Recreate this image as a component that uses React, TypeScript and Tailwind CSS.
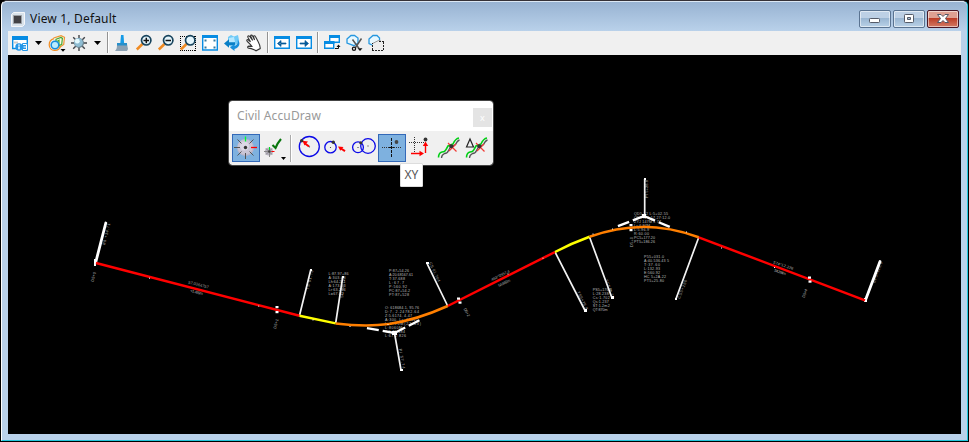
import React from "react";

const FONT = "font-['Noto_Sans',sans-serif]";

function Tool({ children }: { children: React.ReactNode }) {
  return (
    <span className="flex h-6 w-[22px] shrink-0 items-center justify-center">
      <svg width="18" height="18" viewBox="-1 -1 18 18" fill="none">{children}</svg>
    </span>
  );
}

function Caret() {
  return (
    <span className="flex h-6 w-[15px] shrink-0 items-center justify-center">
      <svg width="7" height="4" viewBox="0 0 7 4"><path d="M0 0h7L3.5 4z" fill="#000" /></svg>
    </span>
  );
}

function Separator() {
  return <span className="mx-[2px] my-[1px] block h-[21px] w-[2px] shrink-0 border-l border-[#939393] bg-white" />;
}

function Lens({ mode }: { mode: "plus" | "minus" | "box" }) {
  return (
    <>
      {mode === "box" && <path d="M0 1.5h16M0 15.5h16M.5 1v15M15.5 1v15" stroke="#000" strokeDasharray="1 1" shapeRendering="crispEdges" />}
      <path d="M.8 14.5L6.5 9" stroke="#f08b22" strokeWidth="2.5" />
      <circle cx="10.2" cy="5.3" r="4.7" fill="#e4f5fc" stroke="#17435c" strokeWidth="1.7" />
      {mode !== "box" && <path d="M7.5 5.5h5.5" stroke="#111" strokeWidth="1.5" />}
      {mode === "plus" && <path d="M10.3 2.7v5.5" stroke="#111" strokeWidth="1.5" />}
    </>
  );
}

function PaneArrow({ next = false }: { next?: boolean }) {
  return (
    <>
      <path d="M.7 2h14.6v11.3H.7z" fill="#fff" stroke="#078ce3" strokeWidth="1.4" />
      <path d="M0 1h16v3H0z" fill="#078ce3" />
      <path d={next ? "M4 8h7v1H4zM9 5.5l3.5 3-3.5 3z" : "M5 8h7v1H5zM7 5.5l-3.5 3 3.5 3z"} fill="#075a99" stroke="#075a99" strokeWidth=".7" />
    </>
  );
}

function Toolbar() {
  return (
    <div className="flex h-6 items-start bg-[#f0f0f0] pl-px">
      <Tool>
        <path d="M.7 2h14.6v11.5H.7z" fill="#fff" stroke="#078ce3" strokeWidth="1.4" />
        <path d="M0 1h16v4H0z" fill="#078ce3" />
        <path d="M2 6.5h4v2H2z" fill="#ccc" />
        <circle cx="7" cy="12" r="3.7" fill="#2497e8" />
        <path d="M7 9.5v1.3m0 .8v2.6" stroke="#fff" strokeWidth="1.5" />
        <rect x="10" y="8" width="6" height="8" rx="1" fill="#2497e8" />
        <path d="M11 9.5h3.5v5H11M11.5 12h3" stroke="#fff" />
      </Tool>
      <Caret />
      <Tool>
        <path d="M4.5 3L12 .6l3.5 1.7-.8 7.2-3.5 2.5-3 .2" stroke="#ee9630" strokeWidth="1.2" />
        <path d="M7 4.3l5-1.8 1.4.9-.7 5.9-2.7 1.4V5.3L7 7z" fill="#f7fbe9" stroke="#48a930" strokeWidth="1.2" />
        <path d="M5 3.7C2 4.5.1 7 .2 10c.1 3 2.3 5.3 5.2 5.4 3.3.2 5.5-1.8 6-4.2" stroke="#f38c20" strokeWidth="1.2" />
        <circle cx="6" cy="10" r="3.8" fill="#bbecff" stroke="#168dde" strokeWidth="1.5" />
        <path d="M11.5 14h5L14 16.7z" fill="#000" />
      </Tool>
      <Tool>
        <path d="M8 0v16M0 8h16M2.2 2.2l11.6 11.6M2.2 13.8L13.8 2.2" stroke="#404449" strokeWidth="1.4" />
        <circle cx="8" cy="8" r="5" fill="#6d8490" />
        <circle cx="7.5" cy="7.5" r="4.4" fill="#8fbdd3" />
        <circle cx="6.3" cy="6.2" r="2.4" fill="#e4faff" />
      </Tool>
      <Caret />
      <Separator />
      <Tool>
        <path d="M7 0h2.5l.6 8H6.3z" fill="#169be6" />
        <path d="M3 9h10l1 5-1 2H1c2-2 2-4 2-7z" fill="#8ba1b3" />
        <path d="M3 8h10v2.5H3z" fill="#278fca" />
      </Tool>
      <Tool><Lens mode="plus" /></Tool>
      <Tool><Lens mode="minus" /></Tool>
      <Tool><Lens mode="box" /></Tool>
      <Tool>
        <path d="M.7 1h14.6v14H.7z" fill="#fff" stroke="#078ce3" strokeWidth="1.4" />
        <path d="M0 0h16v3H0z" fill="#078ce3" />
        <path d="M2.5 4.5h2v2h-2zM11.5 4.5h2v2h-2zM2.5 11.5h2v2h-2zM11.5 11.5h2v2h-2z" fill="#36799d" />
      </Tool>
      <Tool>
        <path d="M4 2l3-2 3 1.5L14 0l1 5-2 4-6 3-3-3z" fill="#70caf7" />
        <path d="M5 3l5-1 1 5-4 4-2-2z" fill="#b6e8ff" />
        <path d="M0 8.5L5 4.2v3h6v3H5v2.5z" fill="#087fc6" />
        <path d="M13.7 4.5c3.7 4.5 1 8.2-3.2 9.5V16L6 12.5 10.5 9v2c2.5-.8 3.7-3 3.2-6.5z" fill="#178fdc" />
      </Tool>
      <Tool>
        <path d="M4.5 9.6L1.4 6.5C0 5 1.3 4 2.5 5l2 1.8L2 2.4C1.3 1 2.6.2 3.7 1.5l3 4-2-4.2C4.3 0 5.8-.4 6.6 1l2 4-1-3.2C7.3.5 8.8.3 9.4 1.6l2.8 5.2c1.2 2.2 2.3 4 2 6.8l-4.2 2.2c-2.6-1.2-4-2.6-7.3-2.7-1.6-.2-1.3-1.8.1-2l3 .2z" fill="#fff" stroke="#333" strokeWidth="1.1" />
      </Tool>
      <Separator />
      <Tool><PaneArrow /></Tool>
      <Tool><PaneArrow next /></Tool>
      <Separator />
      <Tool>
        <path d="M5.7 1h9.6v6.3H5.7zM.7 7h9v6.3h-9z" fill="#fff" stroke="#078ce3" strokeWidth="1.4" />
        <path d="M5 0h11v3H5zM0 6h10.4v3H0z" fill="#078ce3" />
        <path d="M11 13.5h3.5V11" stroke="#111" /><path d="M12.5 12h4l-2-2.5z" fill="#111" />
      </Tool>
      <Tool>
        <path d="M1 4l4-3.5h3.5L12 3v5l-4 2.7L1 8z" fill="#e8f8ff" stroke="#2697df" strokeWidth="1.3" />
        <path d="M6.5 4.5l6.5 9M15.5 3.5l-6 9" stroke="#555" strokeWidth="1.5" />
        <circle cx="8" cy="13.8" r="1.6" stroke="#111" strokeWidth="1.3" />
        <path d="M11.5 13.3h5L14 16z" fill="#111" />
      </Tool>
      <Tool>
        <path d="M1 4l4-3.5h4L11.5 3v5l-5 3L1 8.5z" fill="#e8f8ff" stroke="#2697df" strokeWidth="1.3" />
        <path d="M4.5 8.5L10.5 5.5h5v9h-11z" fill="#eee" />
        <path d="M4.5 8.5L10.5 5.5h2" stroke="#999" />
        <path d="M4.5 15V8M4 15.5h12M15.5 15V6M11 6.5h5" stroke="#222" strokeDasharray="2 1" shapeRendering="crispEdges" />
      </Tool>
    </div>
  );
}

function Caption({ type }: { type: "min" | "max" | "close" }) {
  return (
    <button className={`flex h-[18px] w-8 items-center justify-center rounded-[2px] border shadow-[inset_0_0_0_1px_#ffffff88] ${type === "close" ? "border-[#4a1827] bg-linear-to-b from-[#dfa092] from-45% via-[#bc3c26] via-46% to-[#d27964]" : "border-[#5a7391] bg-linear-to-b from-[#bdd0e5] from-45% via-[#9ab6d2] via-46% to-[#b9d1e7]"}`}>
      <svg width="14" height="12" viewBox="0 0 14 12" fill="none">
        {type === "min" && <rect x="1.5" y="5.5" width="10" height="4" rx=".8" fill="#fff" stroke="#555b68" />}
        {type === "max" && <><rect x="2.5" y="1.5" width="9" height="8" rx=".8" fill="#fff" stroke="#555b68" /><path d="M5.5 4.5h3v2h-3z" fill="#a8bfd6" stroke="#555b68" /></>}
        {type === "close" && <path d="M1.5 1.5H5l2 2 2-2h3.5L9.5 5.5l3 4H9l-2-2-2 2H1.5l3-4z" fill="#fff" stroke="#535666" />}
      </svg>
    </button>
  );
}

function Notes({ x, y, rows }: { x: number; y: number; rows: [string, number][] }) {
  return (
    <g fontSize="3.7" fill="#bcbcbc">
      {rows.map(([text, width], i) => <text key={i} x={x} y={y + i * 4} textLength={width}>{text}</text>)}
    </g>
  );
}

function Label({ x, y, angle, width, text }: { x: number; y: number; angle: number; width: number; text: string }) {
  return <text x={x} y={y} transform={`rotate(${angle} ${x} ${y})`} textLength={width} fontSize="4" fill="#a8a8a8">{text}</text>;
}

const ticks = [[149.5, 277.7], [258.7, 305.6], [313, 319.5], [350, 326], [508, 273.5], [543, 257.7], [593, 233.5], [612.5, 228.5], [686.5, 231.5], [721.5, 247.5], [774.5, 267], [388, 324]];
const markers = [[277, 307], [277, 312], [458.5, 298.5], [460, 302.5], [809.5, 277.5], [810, 281.5], [631, 225], [631, 230]];

function Drawing() {
  return (
    <svg className="block" width="953" height="379" viewBox="8 55 953 379" fill="none" fontFamily="Liberation Sans, sans-serif">
      <Notes x={328.5} y={275} rows={[["L:87.97+86", 20], ["A:303.08", 17], ["Lh:64.271", 17], ["A:173.23", 17], ["Lr:63.204", 17], ["L=67.02", 15]]} />
      <Notes x={389} y={272} rows={[["P:87+54.26", 20], ["A:20.68167.61", 24], ["T:37.688", 16], ["L:67.7", 15], ["P:560.92", 18], ["PC:87+54.2", 21], ["PT:87+528", 20]]} />
      <Notes x={385} y={309} rows={[["O: 618684.1, 95.76", 34], ["D:7, 2.24782.64", 34], ["Z:5.6174, 4.47", 27], ["A:300, Lr: 66421", 33], ["L:6.90M(23.03)", 36], ["L:8060M", 17], ["T:2.71.184", 20], ["L:67.2 826", 21]]} />
      <Notes x={634} y={215} rows={[["QD5 12 L:5+02.55", 34], ["QD5 N 5.17.27:12.0", 36], ["ZYJ 147M L 77", 27], ["Ls:6.97M", 16], ["L:5.96.9", 15], ["R:60.00", 15], ["PC5+177.20", 21], ["PT5+186.26", 21]]} />
      <Notes x={644} y={258} rows={[["P55+031.0", 20], ["A:40.536.43 5", 25], ["T:37.60", 16], ["L:132.93", 16], ["E:560.92", 16], ["HC 5+2A.22", 22], ["PT5+25.80", 20]]} />
      <Notes x={592.7} y={291} rows={[["PS5+176.8", 19], ["L:28.238", 16], ["Cs:1.702", 17], ["Qs:1.237", 16], ["ST:1.2m2", 17], ["QT:870m", 15]]} />

      <Label x={188} y={283.5} angle={14} width={21} text="57.0364757" />
      <Label x={190} y={292} angle={14} width={13} text="+1.489m" />
      <Label x={93.5} y={282} angle={-76} width={10} text="D5+0" />
      <Label x={276} y={329} angle={-76} width={10} text="D5+1" />
      <Label x={105} y={245} angle={-76} width={22} text="86 +14.71" />
      <Label x={308.5} y={290} angle={-76} width={20} text="TS 61.76" />
      <Label x={343} y={298} angle={-84} width={19} text="SC 66.72" />
      <Label x={429} y={263} angle={65} width={21} text="CS 61.764" />
      <Label x={463.5} y={309} angle={62} width={9} text="D5+2" />
      <Label x={399} y={349} angle={80} width={20} text="PI 57.74" />
      <Label x={492} y={281} angle={-26} width={20} text="463°'0557.4" />
      <Label x={499} y={287} angle={-26} width={13} text="54.882m" />
      <Label x={577} y={292} angle={64} width={20} text="TS5+76.8" />
      <Label x={605} y={280} angle={70} width={20} text="SC5+0.76" />
      <Label x={648} y={198} angle={-90} width={18} text="PI 5+28.8" />
      <Label x={680} y={299} angle={-69} width={20} text="CS5+266" />
      <Label x={633} y={247} angle={-90} width={10} text="D5+0" />
      <Label x={773} y={263.5} angle={18} width={21} text="574°12.226" />
      <Label x={774} y={271.5} angle={18} width={12} text="54.284m" />
      <Label x={804.5} y={298} angle={-70} width={9} text="D5+4" />
      <Label x={875} y={283} angle={-70} width={22} text="EP5+426.0" />

      <g stroke="#f2f2f2" strokeWidth="1.7">
        <path d="M299.5 315.5L310.7 270M335.7 323L342.7 277M447.7 306L427.2 263.8M555 252L585 310.5M589.5 237L612 298M698.7 237.5L676 298.7" />
        <path d="M394.5 333L401 370M644.7 215.7V179" />
      </g>
      <path d="M95.8 262L105.8 223M865.5 300L880 261.5" stroke="#fff" strokeWidth="2.8" strokeLinecap="round" />
      <g stroke="#fff" strokeWidth="2.4" strokeDasharray="12 4">
        <path d="M394.5 333L366.5 328M394.5 333L421 319.5M644 216L616.5 226.8M644 216L671 227.5" />
      </g>
      <path d="M310 269h2v2h-2zM342 276h2v2h-2zM426 262h3v2h-3zM584 309h3v3h-3zM611 296h3v3h-3zM675 298h2v2h-2zM400 369h3v2h-3zM644 178h2v2h-2zM392 331h5v4h-5zM642 214h4v4h-4zM94 259h2v7h-2zM864 298h3v4h-3z" fill="#fff" />

      <g strokeWidth="2.5">
        <path d="M96 263L299.5 315.7M447.7 306L555 252M698.7 237.3L865 300.3" stroke="#f00" />
        <path d="M299.5 315.7L335.7 323.4M555 252Q572 243 589.5 236.7" stroke="#ff0" />
        <path d="M335.7 323.4C373 328 403 326 447.7 306M589.5 236.7C625 224 659 223 698.7 237.3" stroke="#ff7f00" />
      </g>
      {ticks.map(([x, y]) => <path key={x} d={`M${x - 0.5} ${y + 0.5}h1`} stroke="#fff" strokeWidth="1" />)}
      {markers.map(([x, y]) => <rect key={`${x}-${y}`} x={x - 1.5} y={y - 1} width="3" height="2.2" fill="#fff" />)}
    </svg>
  );
}

function DrawTool({ active = false, children }: { active?: boolean; children: React.ReactNode }) {
  return (
    <span className={`flex size-7 shrink-0 ${active ? "bg-[#7eb1df] outline outline-1 -outline-offset-1 outline-[#3369b8]" : ""}`}>
      <svg width="28" height="28" viewBox="0 0 28 28" fill="none">{children}</svg>
    </span>
  );
}

function Curves() {
  return (
    <>
      <path d="M4.5 23.5q0-4.5 3.5-5.5 3 0 4-2.5l2-3.5 5-2q2.5-5.5 6-6" stroke="#00cf15" strokeWidth="1.6" />
      <path d="M7.5 24q0-3 3-4.5 3 0 4-3l2-3.5 5-2.5q2-4 4-4.5" stroke="#555" strokeWidth="1.3" />
      <path d="M14 9l8.5 8.5M15 17l7-7" stroke="#f13b36" strokeWidth="1.2" />
      <circle cx="17.3" cy="12.3" r="2" fill="#333" />
    </>
  );
}

function AccuDraw() {
  return (
    <section className="absolute left-[221px] top-[46px] h-16 w-[264px] rounded-[3px] bg-[#f0f0f0] outline outline-1 outline-[#444]">
      <header className="flex h-[30px] items-start justify-between rounded-t-[3px] bg-white pl-2">
        <h2 className={`${FONT} pt-[6px] text-[12px] leading-[18px] tracking-[0.12px] text-[#999]`}>Civil AccuDraw</h2>
        <button className={`${FONT} mr-[1px] mt-[7px] flex h-[19px] w-[19px] items-center justify-center bg-[#e4e4e4] text-[9px] text-white`}>x</button>
      </header>
      <div className="flex pl-[3px] pt-[3px]">
        <DrawTool active>
          <circle cx="13.5" cy="13.5" r="8.5" fill="#bbb6cb" />
          <circle cx="13.2" cy="13" r="7.5" fill="#c9c5d5" />
          <circle cx="12.5" cy="12" r="4.5" fill="#dcd8e5" />
          <path d="M13.5 19v6M2 13.5h6M5.5 5.5l4 4M21.5 5.5l-4 4M5.5 21.5l4-4M21.5 21.5l-4-4" stroke="#555" />
          <path d="M13.5 2.5v5" stroke="#0f3" strokeWidth="1.3" /><path d="M19 13.5h6" stroke="#f00" strokeWidth="1.3" />
          <circle cx="13.5" cy="13.5" r="1.7" fill="#333" />
        </DrawTool>
        <DrawTool>
          <circle cx="9" cy="17.5" r="4" fill="#b6b2bf" />
          <path d="M9.5 13v10M4 17.5h10M6 14.5l6 6M6 20.5l6-6" stroke="#888" />
          <path d="M9.5 13v3" stroke="#0d2" /><path d="M11.5 17.5h3" stroke="red" />
          <circle cx="9.3" cy="17.5" r="1.2" fill="#444" />
          <path d="M12.5 11l3 3q2-5 5.5-9" stroke="#08750d" strokeWidth="2.1" />
          <path d="M21 23h5l-2.5 3z" fill="#000" />
        </DrawTool>
        <span className="mx-[2px] mt-px h-[27px] w-[2px] border-l border-[#aaa] bg-white" />
        <DrawTool>
          <circle cx="15.3" cy="12.5" r="10" stroke="#0b09e8" strokeWidth="1.3" />
          <path d="M15 12.5l-4-3" stroke="red" strokeWidth="2" /><path d="M8.5 6.8l5.5.8-3.5 3.8z" fill="red" />
          <circle cx="7.7" cy="6.7" r="1.7" fill="#333" /><circle cx="15.5" cy="12.8" r=".6" fill="#333" />
        </DrawTool>
        <DrawTool>
          <circle cx="8.5" cy="13.2" r="5.7" stroke="#0b09e8" strokeWidth="1.3" />
          <circle cx="8.5" cy="13.5" r=".6" fill="#333" /><circle cx="11.3" cy="8.3" r="1.7" fill="#333" />
          <path d="M19 14.5l4 2.7" stroke="red" strokeWidth="2" /><path d="M16 12.5l5.5.5-3.2 3.8z" fill="red" />
        </DrawTool>
        <DrawTool>
          <circle cx="8" cy="13.3" r="5.4" stroke="#0b09e8" strokeWidth="1.3" />
          <circle cx="18" cy="12" r="7.3" stroke="#0b09e8" strokeWidth="1.3" />
          <path d="M18 11.5v1M8 13v1" stroke="#333" /><circle cx="10.8" cy="8.8" r="1.6" fill="#333" />
        </DrawTool>
        <DrawTool active>
          <g shapeRendering="crispEdges">
            <path d="M4 13.5h20" stroke="#333" strokeDasharray="1 1" />
            <path d="M13.5 4v19M11 13.5h5" stroke="#111" strokeDasharray="3 1" />
          </g>
          <circle cx="18.5" cy="8" r="1.9" fill="#444" />
        </DrawTool>
        <DrawTool>
          <path d="M3 8.5h15M8.5 3v15" stroke="#333" strokeDasharray="1 1" shapeRendering="crispEdges" />
          <circle cx="19.5" cy="5.5" r="1.9" fill="#333" />
          <path d="M5 19.5h10M19.5 19v-9" stroke="red" strokeWidth="1.4" />
          <path d="M13.5 16.7l4.5 2.8-4.5 2.8zM16.8 12l2.7-4.5 2.7 4.5z" fill="red" />
        </DrawTool>
        <DrawTool><Curves /></DrawTool>
        <DrawTool><Curves /><path d="M4.5 13L8 5l3.5 8z" fill="#f0f0f0" stroke="#222" strokeWidth="1.2" /></DrawTool>
      </div>
    </section>
  );
}

export default function App() {
  return (
    <main className="h-[442px] w-[969px] overflow-hidden bg-black pl-px">
      <div className="flex h-[441px] w-[967px] flex-col rounded-t-[6px] border-b border-l border-r border-t border-b-[#22c6dc] border-l-white border-r-[#22c6dc] border-t-[#353137] bg-[#b9d1ea] px-[6px]">
        <header className="-mx-[6px] flex h-[30px] shrink-0 items-start justify-between rounded-t-[5px] border-t border-[#dce8f4] bg-linear-to-b from-[#98b3d2] to-[#b9d1ea] pl-[9px] pr-[8px]">
          <div className="flex items-center pt-[8px]">
            <svg width="14" height="15" viewBox="0 0 14 15"><path d="M.5 2.5l2-2h11v12l-2 2H.5z" fill="#d9e3eb" stroke="#f5f7fa" /><path d="M2.5 3.5h8v8h-8z" fill="#424246" stroke="#9ca0a5" /></svg>
            <h1 className={`${FONT} ml-[5px] text-[12px] leading-[18px] tracking-[0.18px] text-[#111]`}>View 1, Default</h1>
          </div>
          <div className="flex gap-[2px] pt-[8px]"><Caption type="min" /><Caption type="max" /><Caption type="close" /></div>
        </header>
        <div className="w-[953px] shrink-0"><Toolbar /></div>
        <div className="relative h-[379px] w-[953px] shrink-0 bg-black">
          <Drawing />
          <AccuDraw />
          <div className={`${FONT} absolute left-[392px] top-[108px] flex h-6 w-[23px] items-center justify-center rounded-[1px] border border-[#ddd] bg-white text-[12px] text-[#555]`}>XY</div>
        </div>
      </div>
    </main>
  );
}
